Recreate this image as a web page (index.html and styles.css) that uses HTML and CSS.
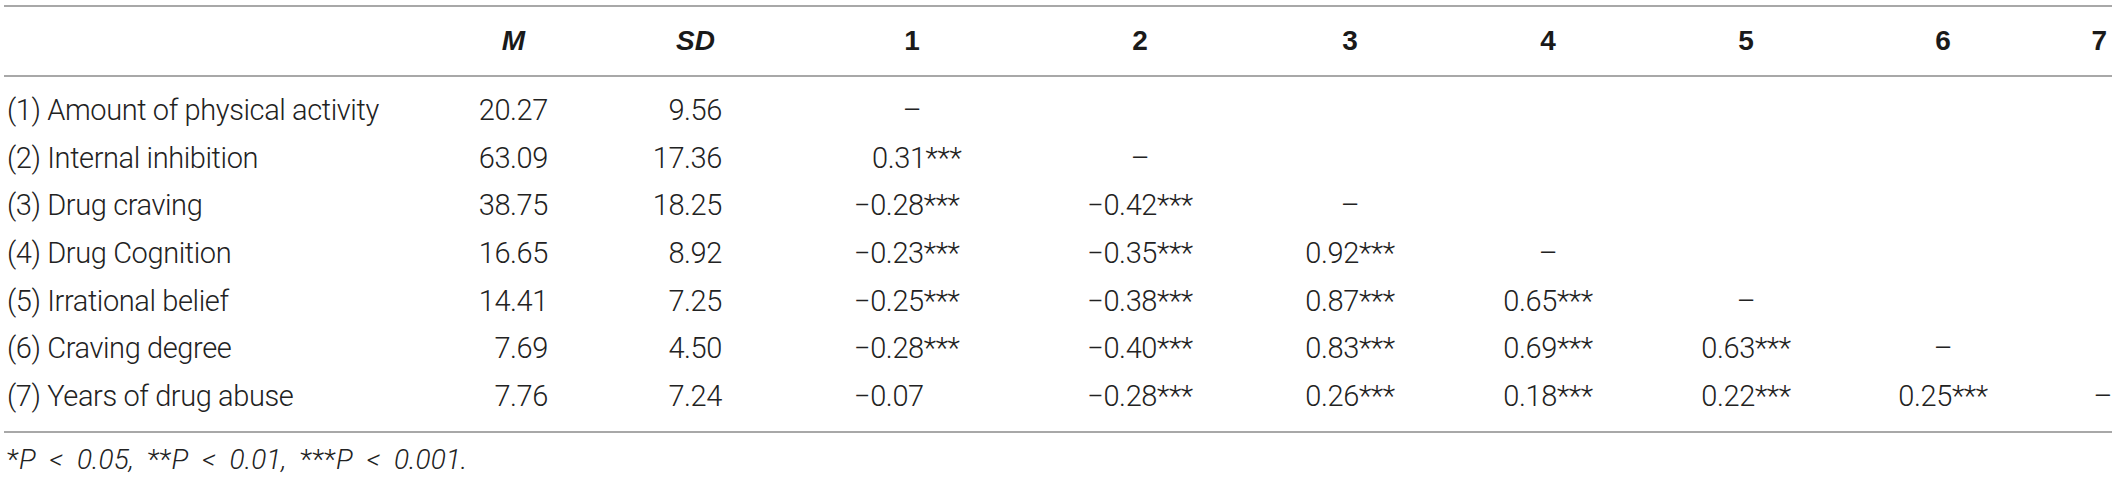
FILE: index.html
```html
<!DOCTYPE html>
<html lang="en">
<head>
<meta charset="utf-8">
<title>Correlations</title>
<link rel="stylesheet" href="styles.css">
</head>
<body>
<div class="wrap">
  <table class="corr">
    <colgroup>
      <col class="w-label"><col class="w-m"><col class="w-sd"><col class="w-c1"><col class="w-c2"><col class="w-c3"><col class="w-c4"><col class="w-c5"><col class="w-c6"><col class="w-c7">
    </colgroup>
    <thead>
      <tr>
        <th class="label"></th>
        <th class="m"><em>M</em></th>
        <th class="sd"><em>SD</em></th>
        <th class="ctr">1</th>
        <th class="ctr">2</th>
        <th class="ctr">3</th>
        <th class="ctr">4</th>
        <th class="ctr">5</th>
        <th class="ctr">6</th>
        <th class="last">7</th>
      </tr>
    </thead>
    <tbody>
      <tr>
        <td class="label">(1) Amount of physical activity</td>
        <td class="m">20.27</td><td class="sd">9.56</td>
        <td class="ctr">–</td><td></td><td></td><td></td><td></td><td></td><td></td>
      </tr>
      <tr>
        <td class="label">(2) Internal inhibition</td>
        <td class="m">63.09</td><td class="sd">17.36</td>
        <td class="dec pos">0.31***</td><td class="ctr">–</td><td></td><td></td><td></td><td></td><td></td>
      </tr>
      <tr>
        <td class="label">(3) Drug craving</td>
        <td class="m">38.75</td><td class="sd">18.25</td>
        <td class="dec">−0.28***</td><td class="ctr">−0.42***</td><td class="ctr">–</td><td></td><td></td><td></td><td></td>
      </tr>
      <tr>
        <td class="label">(4) Drug Cognition</td>
        <td class="m">16.65</td><td class="sd">8.92</td>
        <td class="dec">−0.23***</td><td class="ctr">−0.35***</td><td class="ctr">0.92***</td><td class="ctr">–</td><td></td><td></td><td></td>
      </tr>
      <tr>
        <td class="label">(5) Irrational belief</td>
        <td class="m">14.41</td><td class="sd">7.25</td>
        <td class="dec">−0.25***</td><td class="ctr">−0.38***</td><td class="ctr">0.87***</td><td class="ctr">0.65***</td><td class="ctr">–</td><td></td><td></td>
      </tr>
      <tr>
        <td class="label">(6) Craving degree</td>
        <td class="m">7.69</td><td class="sd">4.50</td>
        <td class="dec">−0.28***</td><td class="ctr">−0.40***</td><td class="ctr">0.83***</td><td class="ctr">0.69***</td><td class="ctr">0.63***</td><td class="ctr">–</td><td></td>
      </tr>
      <tr>
        <td class="label">(7) Years of drug abuse</td>
        <td class="m">7.76</td><td class="sd">7.24</td>
        <td class="dec">−0.07</td><td class="ctr">−0.28***</td><td class="ctr">0.26***</td><td class="ctr">0.18***</td><td class="ctr">0.22***</td><td class="ctr">0.25***</td><td class="last-v">–</td>
      </tr>
    </tbody>
  </table>
  <p class="note"><span class="st">*</span>P &lt; 0.05, <span class="st">**</span>P &lt; 0.01, <span class="st">***</span>P &lt; 0.001.</p>
</div>
</body>
</html>
```

FILE: styles.css
```css
html, body {
  margin: 0;
  padding: 0;
  background: #ffffff;
}

.wrap {
  padding: 5px 5px 0 4px;
  font-family: Roboto, "Liberation Sans", Arial, sans-serif;
  color: #222222;
}

.corr {
  width: 2108px;
  table-layout: fixed;
  border-collapse: collapse;
  border-top: 2px solid #a8a8a8;
  border-bottom: 2px solid #a8a8a8;
}

.w-label { width: 436px; }
.w-m { width: 120px; }
.w-sd { width: 238px; }
.w-c1 { width: 228px; }
.w-c2 { width: 228px; }
.w-c3 { width: 192px; }
.w-c4 { width: 204px; }
.w-c5 { width: 192px; }
.w-c6 { width: 202px; }
.w-c7 { width: 68px; }

.corr th,
.corr td {
  padding: 0;
  white-space: nowrap;
  vertical-align: middle;
}

.corr thead tr {
  height: 70px;
  border-bottom: 2px solid #a8a8a8;
}

.corr th {
  font-size: 28px;
  font-weight: 700;
  color: #1a1a1a;
  font-family: "Liberation Sans", Arial, sans-serif;
}

.corr th em {
  font-style: italic;
}

.corr td {
  font-size: 29px;
  letter-spacing: -0.4px;
  font-weight: 300;
  height: 47.7px;
  line-height: 30px;
}

.corr tbody tr:first-child td {
  padding-top: 9px;
}

.corr tbody tr:last-child td {
  padding-bottom: 11px;
}

.label {
  text-align: left;
  padding-left: 3px !important;
}

td.m {
  text-align: right;
  padding-right: 12px !important;
}

th.m {
  text-align: right;
  padding-right: 35px !important;
}

td.sd {
  text-align: right;
  padding-right: 76px !important;
}

th.sd {
  text-align: right;
  padding-right: 83px !important;
}

.ctr {
  text-align: center;
}

.dec {
  text-align: left;
  padding-left: 56px !important;
}

.dec.pos {
  padding-left: 74px !important;
}

th.last {
  text-align: right;
  padding-right: 5px !important;
}

td.last-v {
  text-align: right;
}

.note {
  margin: 12px 0 0 3px;
  font-size: 28px;
  font-weight: 300;
  font-style: italic;
  word-spacing: 7px;
  line-height: 30px;
  color: #222222;
}

.note .st {
  font-style: normal;
}
```
